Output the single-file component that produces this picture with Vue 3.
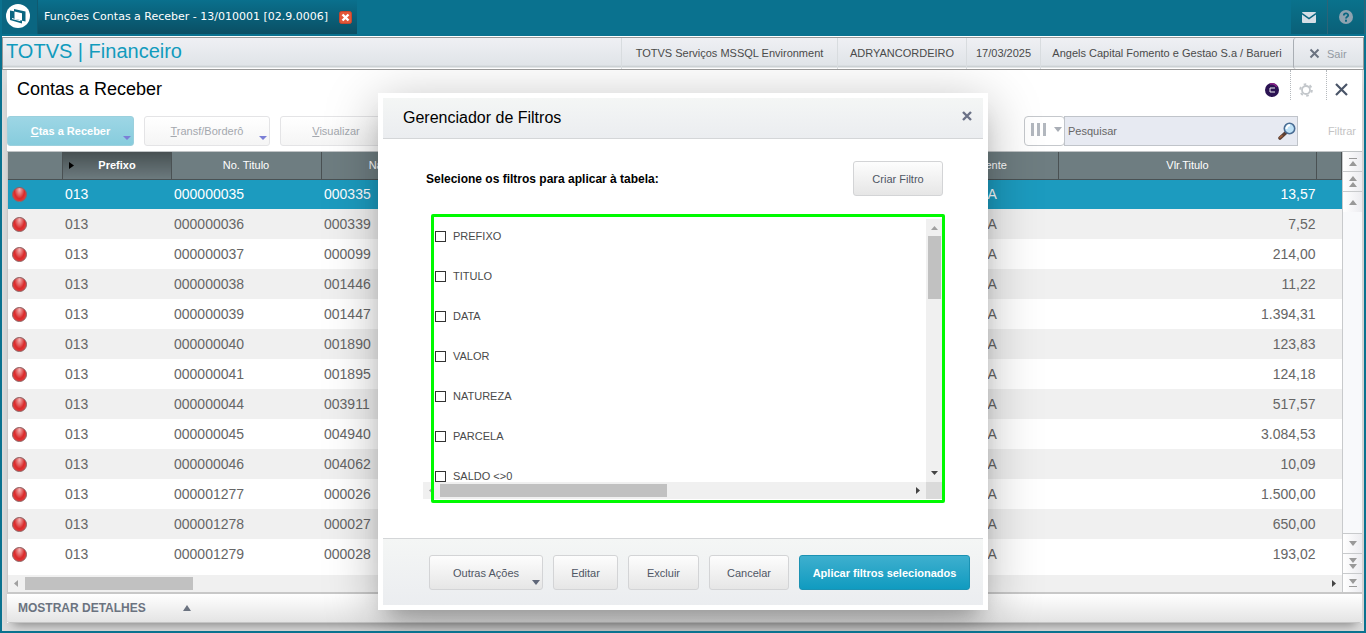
<script setup>
import { ref } from 'vue'

const rows = [
  ['013', '000000035', '000335', '13,57'],
  ['013', '000000036', '000339', '7,52'],
  ['013', '000000037', '000099', '214,00'],
  ['013', '000000038', '001446', '11,22'],
  ['013', '000000039', '001447', '1.394,31'],
  ['013', '000000040', '001890', '123,83'],
  ['013', '000000041', '001895', '124,18'],
  ['013', '000000044', '003911', '517,57'],
  ['013', '000000045', '004940', '3.084,53'],
  ['013', '000000046', '004062', '10,09'],
  ['013', '000001277', '000026', '1.500,00'],
  ['013', '000001278', '000027', '650,00'],
  ['013', '000001279', '000028', '193,02'],
]
const filters = ['PREFIXO', 'TITULO', 'DATA', 'VALOR', 'NATUREZA', 'PARCELA', 'SALDO <>0']
const chosen = ref([])
const search = ref('')
</script>

<template>
  <div class="app">
    <header class="topbar">
      <div class="logo">
        <svg width="26" height="26" viewBox="0 0 26 26">
          <circle cx="13" cy="13" r="12" fill="#fff" />
          <path d="M5 7.500 L9 8.200 V6 L20.500 8.500 V18.500 L17 17.800 V20.500 L5 17 Z" fill="#0a6681" />
          <path d="M9.500 8.500 L17 10.200 V17.500 L9.500 15.800 Z" fill="#fff" />
          <path d="M10.500 10.500 L13 11 L15.500 15.500 L13 15 Z" fill="#fff" />
          <path d="M7 15 L9.500 15.800 L15.500 17.200 V18.300 L7 16 Z" fill="#fff" />
        </svg>
      </div>
      <div class="tab">
        <span>Funções Contas a Receber - 13/010001 [02.9.0006]</span>
        <button class="tab-close" aria-label="Fechar aba">
          <svg width="13" height="13" viewBox="0 0 13 13">
            <rect x="0.500" y="0.500" width="12" height="12" rx="2" fill="#e2583a" stroke="#c8452c" />
            <path d="M3.500 3.500 L9.500 9.500 M9.500 3.500 L3.500 9.500" stroke="#fff" stroke-width="2.400" />
          </svg>
        </button>
      </div>
      <div class="spacer"></div>
      <button class="top-btn" aria-label="Mensagens">
        <svg width="14" height="11" viewBox="0 0 14 11">
          <rect width="14" height="11" rx="1" fill="#d6dee6" />
          <path d="M0 1.500 L7 6.500 L14 1.500" fill="none" stroke="#0a6681" stroke-width="1.500" />
        </svg>
      </button>
      <button class="top-btn" aria-label="Ajuda">
        <svg width="14" height="14" viewBox="0 0 14 14">
          <circle cx="7" cy="7" r="7" fill="#8ea3b0" />
          <path d="M4.800 5.500 C4.800 2.800 9.200 2.800 9.200 5.300 C9.200 6.800 7 6.900 7 8.600" fill="none" stroke="#0a6681" stroke-width="1.800" />
          <rect x="6" y="9.700" width="2" height="2" fill="#0a6681" />
        </svg>
      </button>
    </header>

    <div class="frame">
      <div class="infobar">
        <div class="brand">TOTVS | Financeiro</div>
        <div class="info">
          <span>TOTVS Serviços MSSQL Environment</span>
          <span>ADRYANCORDEIRO</span>
          <span>17/03/2025</span>
          <span>Angels Capital Fomento e Gestao S.a / Barueri</span>
          <button class="exit">
            <svg width="11" height="11" viewBox="0 0 11 11"><path d="M1.500 1.500 L9.500 9.500 M9.500 1.500 L1.500 9.500" stroke="#6b7380" stroke-width="2" /></svg>
            Sair
          </button>
        </div>
      </div>

      <div class="stage">
        <main class="panel">
          <div class="title-row">
            <h1>Contas a Receber</h1>
            <div class="tools">
              <button aria-label="Assistente">
                <svg width="14" height="14" viewBox="0 0 14 14">
                  <circle cx="7" cy="7" r="7" fill="#2b1353" />
                  <path d="M5 1 A6.200 6.200 0 0 1 12 4" fill="none" stroke="#8a2288" stroke-width="1.500" />
                  <path d="M10 5 H5 V9 H10" fill="none" stroke="#eee" stroke-width="1" />
                </svg>
              </button>
              <button aria-label="Configurações">
                <svg width="14" height="14" viewBox="0 0 14 14">
                  <circle cx="7" cy="7" r="4" fill="none" stroke="#c3c7cb" stroke-width="1.800" />
                  <circle cx="7" cy="7" r="5.800" fill="none" stroke="#c3c7cb" stroke-width="2" stroke-dasharray="2.600 3.470" />
                </svg>
              </button>
              <button aria-label="Fechar">
                <svg width="13" height="13" viewBox="0 0 13 13"><path d="M1 1 L12 12 M12 1 L1 12" stroke="#4a5568" stroke-width="2.200" /></svg>
              </button>
            </div>
          </div>

          <div class="toolbar">
            <button class="tb primary"><span><u>C</u>tas a Receber</span><i class="drop"></i></button>
            <button class="tb"><span><u>T</u>ransf/Borderô</span><i class="drop"></i></button>
            <button class="tb view"><span><u>V</u>isualizar</span></button>
            <div class="spacer"></div>
            <button class="columns" aria-label="Colunas">
              <svg width="31" height="14" viewBox="0 0 31 14">
                <path d="M0 0 h3 v13 h-3 Z M6 0 h3 v13 h-3 Z M12 0 h3 v13 h-3 Z" fill="#b3b8bf" />
                <path d="M23 4 h8 l-4 5 Z" fill="#a9aeb6" />
              </svg>
            </button>
            <div class="search">
              <input v-model="search" type="text" placeholder="Pesquisar" aria-label="Pesquisar" />
              <button aria-label="Buscar">
                <svg width="18" height="18" viewBox="0 0 18 18">
                  <path d="M2 16 L7.500 11" stroke="#5b4035" stroke-width="3.600" stroke-linecap="round" />
                  <path d="M2 15.500 L4 13.800" stroke="#a8623c" stroke-width="1.600" stroke-linecap="round" />
                  <circle cx="11.500" cy="6.500" r="5.200" fill="#bfe2f7" stroke="#4a6d94" stroke-width="1.600" />
                  <path d="M8.500 7 A3.500 3.500 0 0 1 12 3.200" fill="none" stroke="#fff" stroke-width="2" />
                </svg>
              </button>
            </div>
            <button class="filter">Filtrar</button>
          </div>

          <div class="grid">
            <div class="grid-main">
              <table>
                <colgroup>
                  <col class="c-dot" /><col class="c-pre" /><col class="c-tit" /><col class="c-nat" /><col /><col class="c-cli" /><col class="c-val" /><col class="c-end" />
                </colgroup>
                <thead>
                  <tr>
                    <th></th>
                    <th class="sorted"><div class="sort"><svg width="5" height="7" viewBox="0 0 5 7"><path d="M0 0 L5 3.500 L0 7 Z" /></svg><span>Prefixo</span></div></th>
                    <th>No. Titulo</th>
                    <th>Natureza</th>
                    <th></th>
                    <th>Nome Cliente</th>
                    <th>Vlr.Titulo</th>
                    <th></th>
                  </tr>
                </thead>
                <tbody>
                  <tr v-for="(r, i) in rows" :key="i" :class="{ selected: i === 0 }">
                    <td class="dot-cell"><i class="dot"></i></td>
                    <td>{{ r[0] }}</td>
                    <td>{{ r[1] }}</td>
                    <td>{{ r[2] }}</td>
                    <td></td>
                    <td class="client">A</td>
                    <td class="num">{{ r[3] }}</td>
                    <td></td>
                  </tr>
                </tbody>
              </table>
              <div class="spacer"></div>
              <div class="hbar">
                <svg width="4" height="7" viewBox="0 0 4 7"><path d="M4 0 V7 L0 3.500 Z" fill="#a0a0a0" /></svg>
                <i class="thumb"></i>
                <div class="spacer"></div>
                <svg width="4" height="7" viewBox="0 0 4 7"><path d="M0 0 V7 L4 3.500 Z" fill="#444" /></svg>
              </div>
            </div>
            <div class="nav">
              <button aria-label="Primeiro"><svg width="8" height="8" viewBox="0 0 8 8"><path d="M0 0 H8 V1 H0 Z M4 3 L8 8 H0 Z" /></svg></button>
              <button aria-label="Página anterior"><svg width="8" height="12" viewBox="0 0 8 12"><path d="M4 0 L8 5 H0 Z M4 6 L8 11 H0 Z" /></svg></button>
              <button aria-label="Anterior"><svg width="8" height="5" viewBox="0 0 8 5"><path d="M4 0 L8 5 H0 Z" /></svg></button>
              <div class="spacer"></div>
              <button aria-label="Próximo"><svg width="8" height="5" viewBox="0 0 8 5"><path d="M0 0 H8 L4 5 Z" /></svg></button>
              <button aria-label="Próxima página"><svg width="8" height="12" viewBox="0 0 8 12"><path d="M0 0 H8 L4 5 Z M0 6 H8 L4 11 Z" /></svg></button>
              <button aria-label="Último"><svg width="8" height="8" viewBox="0 0 8 8"><path d="M0 0 H8 L4 5 Z M0 7 H8 V8 H0 Z" /></svg></button>
            </div>
          </div>
          <button class="details">
            MOSTRAR DETALHES
            <svg width="8" height="6" viewBox="0 0 8 6"><path d="M4 0 L8 6 H0 Z" fill="#6b7380" /></svg>
          </button>
        </main>

        <div class="overlay">
          <section class="dialog" role="dialog" aria-labelledby="dlg-title">
            <div class="dlg-head">
              <h2 id="dlg-title">Gerenciador de Filtros</h2>
              <button aria-label="Fechar janela">
                <svg width="10" height="10" viewBox="0 0 10 10"><path d="M1 1 L9 9 M9 1 L1 9" stroke="#6b7286" stroke-width="2.400" /></svg>
              </button>
            </div>
            <div class="dlg-body">
              <div class="pick">
                <strong>Selecione os filtros para aplicar à tabela:</strong>
                <button class="btn create">Criar Filtro</button>
              </div>
              <div class="list">
                <div class="options">
                  <label v-for="f in filters" :key="f">
                    <input v-model="chosen" type="checkbox" :value="f" />
                    <span>{{ f }}</span>
                  </label>
                </div>
                <div class="vscroll">
                  <svg width="7" height="4" viewBox="0 0 7 4"><path d="M3.500 0 L7 4 H0 Z" fill="#a0a0a0" /></svg>
                  <i class="vthumb"></i>
                  <div class="spacer"></div>
                  <svg width="7" height="4" viewBox="0 0 7 4"><path d="M0 0 H7 L3.500 4 Z" fill="#444" /></svg>
                </div>
                <div class="hscroll">
                  <svg width="4" height="7" viewBox="0 0 4 7"><path d="M4 0 V7 L0 3.500 Z" fill="#a0a0a0" /></svg>
                  <i class="hthumb"></i>
                  <div class="spacer"></div>
                  <svg width="4" height="7" viewBox="0 0 4 7"><path d="M0 0 V7 L4 3.500 Z" fill="#444" /></svg>
                </div>
                <div class="corner"></div>
                <div class="highlight"></div>
              </div>
            </div>
            <div class="dlg-foot">
              <button class="btn other">Outras Ações<i class="drop"></i></button>
              <button class="btn edit">Editar</button>
              <button class="btn remove">Excluir</button>
              <button class="btn cancel">Cancelar</button>
              <button class="btn apply">Aplicar filtros selecionados</button>
            </div>
          </section>
        </div>
      </div>
    </div>
  </div>
</template>

<style>
body {
  margin: 0;
  background: #0a728f;
}
</style>

<style scoped>
* {
  box-sizing: border-box;
}
.app {
  min-height: 100vh;
  display: flex;
  flex-direction: column;
  background: #0a728f;
  font: 11px/14px "Liberation Sans", Arial, sans-serif;
  color: #4a4a4a;
}
button,
input {
  font: inherit;
  color: inherit;
  margin: 0;
  padding: 0;
  border: 0;
  background: none;
}
svg {
  display: block;
  flex: none;
}
.spacer {
  flex: 1;
}
.topbar {
  display: flex;
  height: 36px;
  padding: 0 1px 2px 2px;
}
.logo {
  width: 36px;
  padding: 3px 3px;
  background: #0a6681;
  border-right: 1px solid #0f5a70;
}
.tab {
  display: flex;
  align-items: center;
  justify-content: space-between;
  min-width: 319px;
  gap: 5px;
  padding: 0 5px 0 6px;
  background: linear-gradient(#0a708d, #0a4f64);
  color: #fff;
  font-family: "DejaVu Sans", Verdana, sans-serif;
}
.top-btn {
  width: 37px;
  display: flex;
  align-items: center;
  justify-content: center;
  background: linear-gradient(#0a728c, #0a6078);
  border-right: 1px solid #2c6478;
}
.frame {
  flex: 1;
  display: flex;
  flex-direction: column;
  margin: 0 2px 2px;
  background: #fff;
}
.infobar {
  display: flex;
  justify-content: space-between;
  height: 33px;
  margin-top: 1px;
  border: 1px solid #999;
  background: linear-gradient(#eff0f4, #e0e4e8 27px, #c4cacd 29px, #fff 30px);
}
.brand {
  padding-left: 3px;
  font-size: 20px;
  line-height: 27px;
  color: #119bbd;
}
.info {
  display: grid;
  grid-template-columns: 216px 129px 74px 253px 70px;
  height: 29px;
}
.info span {
  text-align: center;
  line-height: 31px;
  white-space: nowrap;
  border-left: 1px solid #d8dcdf;
}
.exit {
  display: flex;
  align-items: center;
  gap: 7px;
  padding-left: 15px;
  border-left: 1px solid #a9aeb4;
  border-radius: 3px 0 0 3px;
  color: #939aa3;
}
.stage {
  position: relative;
  flex: 1;
  display: flex;
  overflow: hidden;
  padding: 0 2px 8px 5px;
  background: #dcdcdc;
}
.panel {
  flex: 1;
  min-width: 0;
  display: flex;
  flex-direction: column;
  background: #fff;
  box-shadow: 0 8px 10px -6px rgba(0, 0, 0, 0.4);
}
.title-row {
  display: flex;
  justify-content: space-between;
  height: 46px;
  padding-left: 10px;
}
h1 {
  margin: 0;
  font-weight: normal;
  font-size: 18px;
  line-height: 38px;
  color: #000;
}
.tools {
  display: flex;
  height: 30px;
}
.tools button {
  width: 36px;
  display: flex;
  align-items: center;
  justify-content: center;
  padding-top: 9px;
}
.tools button + button {
  padding-right: 6px;
  border-left: 1px dotted #b5b9bd;
}
.toolbar {
  display: flex;
  height: 35px;
  padding-bottom: 5px;
}
.tb {
  position: relative;
  width: 126px;
  margin-right: 10px;
  border: 1px solid #e4e4e6;
  border-radius: 3px;
  background: linear-gradient(#fff, #f5f5f5);
  color: #a4a8ae;
}
.primary {
  width: 127px;
  background: linear-gradient(#9dd6e5, #87ccdd);
  border-color: #9bd0dd;
  color: #fff;
  font-weight: bold;
}
.view {
  width: 112px;
}
.drop {
  position: absolute;
  right: 2px;
  bottom: 5px;
  border: 4px solid transparent;
  border-top-color: #7b7fd6;
  border-bottom: 0;
}
.columns {
  width: 41px;
  padding-left: 6px;
  padding-bottom: 2px;
  border: 1px solid #c5c8cc;
  border-radius: 4px;
  background: #fff;
}
.search {
  display: flex;
  align-items: center;
  width: 234px;
  padding: 0 1px 0 3px;
  margin-left: -1px;
  border: 1px solid #c0c4ca;
  background: #e7eaf2;
}
.search input {
  flex: 1;
  min-width: 0;
  outline: 0;
}
.search input::placeholder {
  color: #666;
  opacity: 1;
}
.filter {
  width: 64px;
  padding-right: 6px;
  text-align: right;
  color: #c4c4c4;
}
.grid {
  flex: 1;
  display: flex;
  border-top: 1px solid #c0c4c6;
  border-bottom: 2px solid #c8c8c8;
}
.grid-main {
  flex: 1;
  min-width: 0;
  display: flex;
  flex-direction: column;
  border-left: 1px solid #c8c8c8;
}
table {
  width: 100%;
  table-layout: fixed;
  border-collapse: collapse;
}
.c-dot { width: 54px; }
.c-pre { width: 109px; }
.c-tit { width: 150px; }
.c-nat { width: 140px; }
.c-cli { width: 170px; }
.c-val { width: 258px; }
.c-end { width: 25px; }
th {
  height: 27px;
  padding: 0;
  font-weight: normal;
  color: #fff;
  background: #6e7d81;
  border-right: 1px solid #4a5153;
  border-bottom: 1px solid #4a5153;
}
.sorted {
  background: linear-gradient(#475052, #6c7a7e);
  font-weight: bold;
}
.sort {
  display: flex;
  align-items: center;
  padding-left: 6px;
}
.sort span {
  flex: 1;
  padding-right: 10px;
}
td {
  height: 30px;
  padding: 0 1px 0 3px;
  font-size: 14px;
  line-height: 16px;
  color: #666;
}
tbody tr:nth-child(even) {
  background: #f0f0f0;
}
tbody tr.selected {
  background: #1c9bbf;
}
.selected td {
  color: #fff;
}
.dot-cell {
  padding-left: 4px;
}
.dot {
  display: block;
  width: 15px;
  height: 15px;
  border-radius: 50%;
  border: 1px solid #8b6464;
  background: radial-gradient(ellipse at 50% 15%, #f5b5b5 0, #e46a6a 30%, #d92a2a 55%, #f04a4a 100%);
}
.client {
  padding-left: 99px;
}
.num {
  text-align: right;
}
.hbar {
  display: flex;
  align-items: center;
  height: 17px;
  padding: 0 6px;
  background: #f0f0f0;
}
.thumb {
  width: 168px;
  height: 13px;
  margin-left: 7px;
  background: #c1c1c1;
}
.nav {
  width: 20px;
  display: flex;
  flex-direction: column;
  background: #f8f9fb;
  border-left: 1px solid #c8cacc;
}
.nav button {
  height: 20px;
  display: flex;
  align-items: center;
  justify-content: center;
  background: linear-gradient(90deg, #fff, #ececf0);
  border-bottom: 1px solid #c8cacc;
}
.nav .spacer {
  border-bottom: 1px solid #c8cacc;
}
.nav button:nth-child(3),
.nav button:last-child {
  border-bottom: 0;
}
.nav button:last-child {
  height: 18px;
}
.nav path {
  fill: #999;
}
.details {
  display: flex;
  align-items: center;
  gap: 37px;
  height: 29px;
  padding-left: 11px;
  background: linear-gradient(#fff, #e4e4e4);
  border-bottom: 1px solid #c4c4c4;
  border-radius: 0 0 3px 3px;
  font-size: 12px;
  font-weight: bold;
  color: #6b7380;
}
.overlay {
  position: absolute;
  inset: 0;
  display: flex;
  justify-content: center;
  align-items: flex-start;
  padding-top: 23px;
}
.dialog {
  width: 610px;
  padding: 5px;
  background: #fff;
  box-shadow: 0 10px 50px rgba(0, 0, 0, 0.28), 0 15px 20px -10px rgba(0, 0, 0, 0.25);
}
.dlg-head {
  display: flex;
  justify-content: space-between;
  align-items: center;
  height: 41px;
  padding: 0 11px 0 20px;
  background: linear-gradient(#f4f6f5, #ebedf0);
  border-bottom: 1px solid #d4d6d8;
}
h2 {
  margin: 0;
  font-weight: normal;
  font-size: 16px;
  line-height: 18px;
  color: #000;
}
.dlg-head button {
  padding-bottom: 4px;
}
.dlg-body {
  padding: 22px 40px 39px;
}
.pick {
  display: flex;
  align-items: center;
  justify-content: space-between;
  padding-left: 3px;
  font-size: 12px;
  color: #000;
}
.btn {
  position: relative;
  height: 35px;
  border: 1px solid #d3d4d6;
  border-radius: 3px;
  background: linear-gradient(#fdfdfd, #e6e6e6);
  font-size: 11px;
  color: #4f5664;
}
.create { width: 90px; }
.other { width: 114px; }
.edit { width: 65px; }
.remove { width: 71px; }
.cancel { width: 80px; }
.apply {
  width: 171px;
  border-color: #1b92b3;
  background: linear-gradient(#3eafce, #109bc0);
  font-weight: bold;
  color: #fff;
}
.btn .drop {
  bottom: 4px;
  border-top: 5px solid #5f6678;
}
.list {
  position: relative;
  display: grid;
  grid-template-columns: 1fr 17px;
  grid-template-rows: 263px 17px;
  margin-top: 23px;
}
.options {
  overflow: hidden;
  padding: 10px 0 0 12px;
}
.options label {
  display: flex;
  align-items: center;
  gap: 7px;
  height: 14px;
  margin-bottom: 26px;
}
.options input {
  appearance: none;
  width: 11px;
  height: 11px;
  border: 1px solid #333;
  background: #fff;
}
.options input:checked {
  background: #1c9bbf;
}
.vscroll {
  display: flex;
  flex-direction: column;
  align-items: center;
  padding: 7px 0;
  background: #f0f0f0;
}
.vthumb {
  width: 13px;
  height: 63px;
  margin-top: 6px;
  background: #c1c1c1;
}
.hscroll {
  display: flex;
  align-items: center;
  padding: 0 6px;
  background: #f0f0f0;
}
.hthumb {
  width: 227px;
  height: 13px;
  margin-left: 7px;
  background: #c1c1c1;
}
.corner {
  background: #dadada;
}
.highlight {
  position: absolute;
  inset: -5px -2px -4px 8px;
  border: 3px solid #00fa00;
  border-radius: 2px;
  pointer-events: none;
}
.dlg-foot {
  display: flex;
  gap: 10px;
  height: 67px;
  padding: 16px 13px 0 46px;
  border-top: 1px solid #d4d6d8;
  background: linear-gradient(#f4f6f5, #ebedf0);
}
</style>
